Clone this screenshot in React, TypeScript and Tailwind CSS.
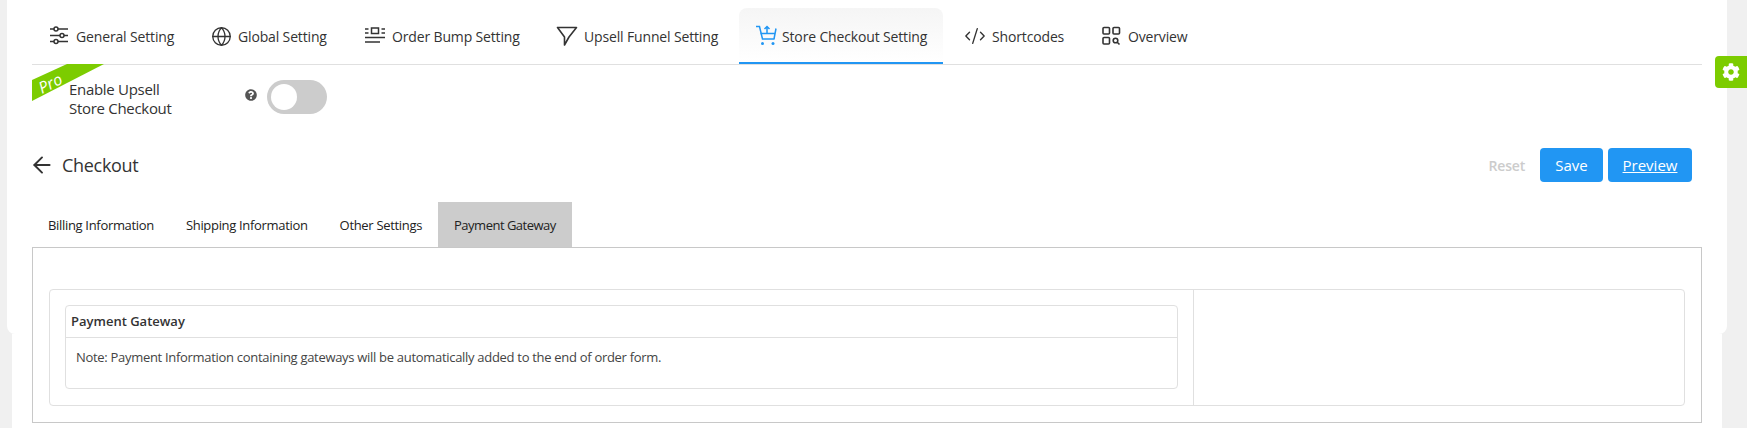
import { ArrowLeft, CodeXml, Globe } from 'lucide-react';
import { FaCog, FaQuestionCircle } from 'react-icons/fa';

const SlidersIcon = () => (
  <svg width="20" height="20" viewBox="0 0 20 20" fill="none" stroke="currentColor" strokeWidth="1.5">
    <path d="M1 3h4M9 3h10M1 9.500h10M15 9.500h4M1 15.500h4M9 15.500h10" />
    <circle cx="7" cy="3" r="2" />
    <circle cx="13" cy="9.500" r="2" />
    <circle cx="7" cy="15.500" r="2" />
  </svg>
);

const BumpIcon = () => (
  <svg width="20" height="20" viewBox="0 0 20 20" fill="none" stroke="currentColor" strokeWidth="1.500">
    <rect x="6.500" y="2" width="7" height="5.500" />
    <path d="M0 3h3.500M16.500 3H20M0 7h3.500M16.500 7H20M0 11.500h20M0 16h15" />
  </svg>
);

const FunnelIcon = () => (
  <svg width="22" height="22" viewBox="0 0 22 22" fill="none" stroke="currentColor" strokeWidth="1.600" strokeLinejoin="round">
    <path d="M1.500 2.500h19L13 12l-4.500 8v-8z" />
  </svg>
);

const CartIcon = () => (
  <svg width="22" height="22" viewBox="0 0 22 22" fill="none" stroke="currentColor" strokeWidth="1.500">
    <path d="M1 1.500h3.500l3 12.500h12" />
    <path d="M5.500 8.500h15M21 3.500 19 14" />
    <path d="M12 9V1.500M9.500 4 12 1.500 14.500 4" />
    <circle cx="7.500" cy="18.500" r="1.500" fill="currentColor" stroke="none" />
    <circle cx="18" cy="18.500" r="1.500" fill="currentColor" stroke="none" />
  </svg>
);

const OverviewIcon = () => (
  <svg width="20" height="20" viewBox="0 0 20 20" fill="none" stroke="currentColor" strokeWidth="1.600">
    <rect x="2" y="1.500" width="6.500" height="6.500" rx="1" />
    <rect x="12" y="1.500" width="6.500" height="6.500" rx="1" />
    <rect x="2" y="11.500" width="6.500" height="6.500" rx="1" />
    <circle cx="14.500" cy="14.500" r="2.300" />
    <path d="m16.200 16.200 2.300 2.300" />
  </svg>
);

const navItems = [
  { label: 'General Setting', icon: <SlidersIcon />, width: 'w-[162px]' },
  { label: 'Global Setting', icon: <Globe size={21} strokeWidth={1.5} />, width: 'w-[154px]' },
  { label: 'Order Bump Setting', icon: <BumpIcon />, width: 'w-[192px]' },
  { label: 'Upsell Funnel Setting', icon: <FunnelIcon />, width: 'w-[199px]' },
  { label: 'Store Checkout Setting', icon: <CartIcon />, width: 'w-[204px] mr-[5px]', active: true },
  { label: 'Shortcodes', icon: <CodeXml size={22} strokeWidth={1.5} />, width: 'w-[136px]' },
  { label: 'Overview', icon: <OverviewIcon />, width: 'w-[120px]' },
];

const tabs = ['Billing Information', 'Shipping Information', 'Other Settings', 'Payment Gateway'];

export default function App() {
  return (
    <div className="relative h-[428px] w-full overflow-hidden bg-[#f0f0f0] font-['Open_Sans',sans-serif] text-[#333]">
      {/* Floating settings handle */}
      <div className="absolute right-0 top-[56px] z-20 flex h-[32px] w-[32px] items-center justify-center rounded-l bg-[#7ccc00] text-white">
        <FaCog size={18} />
      </div>

      <div className="relative z-10 ml-[7px] h-[334px] w-[1720px] rounded-b-lg bg-white px-[25px]">
        {/* Top nav */}
        <div className="flex h-[65px] border-b border-[#e0e0e0] pt-2">
          {navItems.map((item) => (
            <div
              key={item.label}
              className={`flex h-[56px] shrink-0 items-center pl-[16px] text-[14px] font-medium tracking-[-0.15px] ${item.width} ${
                item.active
                  ? 'gap-[5px] rounded-t-lg border-b-2 border-[#2196f3] bg-gradient-to-b from-[#f5f5f5] to-white pt-[2px]'
                  : 'gap-[6px]'
              }`}
            >
              <span className={`flex w-[22px] shrink-0 justify-center ${item.active ? 'text-[#2196f3]' : 'text-[#333]'}`}>
                {item.icon}
              </span>
              <span className="whitespace-nowrap">{item.label}</span>
            </div>
          ))}
        </div>

        {/* Pro toggle row */}
        <div className="relative flex h-[50px] items-start">
          <svg className="absolute -top-px left-0" width="73" height="37" viewBox="0 0 73 37">
            <polygon points="0,16 35,0 72,0 0,37" fill="#7ccc00" />
            <text x="10" y="30" transform="rotate(-27 10 30)" fill="#fff" fontSize="16" fontStyle="italic" fontFamily="Open Sans">
              Pro
            </text>
          </svg>
          <div className="ml-[37px] mt-[15px] w-[176px] text-[15px] font-medium leading-[19px] tracking-[-0.3px]">
            Enable Upsell
            <br />
            Store Checkout
          </div>
          <FaQuestionCircle className="mt-[24px] text-[#555]" size={12} />
          <div className="ml-[10px] mt-[15px] flex h-[34px] w-[60px] items-center rounded-full bg-[#ccc] pl-[4px]">
            <div className="h-[26px] w-[26px] rounded-full bg-white" />
          </div>
        </div>

        {/* Checkout header */}
        <div className="mt-[33px] flex h-[34px] items-center">
          <ArrowLeft size={26} strokeWidth={1.800} className="-ml-[3px] text-[#333]" />
          <span className="ml-[7px] text-[18px] font-medium tracking-[-0.3px]">Checkout</span>
          <span className="ml-auto mr-[15px] text-[14px] font-semibold tracking-[-0.2px] text-[#ccc]">Reset</span>
          <button className="h-[34px] w-[63px] rounded bg-[#2196f3] text-[15px] text-white">Save</button>
          <button className="ml-[5px] mr-[10px] h-[34px] w-[84px] rounded bg-[#2196f3] text-[15px] text-white underline">
            Preview
          </button>
        </div>

        {/* Sub tabs */}
        <div className="mt-[20px] flex h-[45px]">
          {tabs.map((tab) => (
            <div
              key={tab}
              className={`flex items-center px-4 pt-[2px] text-[13px] text-[#222] ${
                tab === 'Payment Gateway' ? 'bg-[#ccc] tracking-[-0.5px]' : 'tracking-[-0.32px]'
              }`}
            >
              {tab}
            </div>
          ))}
        </div>

        {/* Payment box */}
        <div className="h-[176px] w-full border border-[#c8c8c8] bg-white px-[16px] pt-[41px]">
          <div className="flex h-[117px] rounded border border-[#e0e0e0]">
            <div className="w-[1144px] border-r border-[#e0e0e0] px-[15px] pt-[15px]">
              <div className="h-[84px] rounded border border-[#e0e0e0]">
                <div className="flex h-[32px] items-center border-b border-[#e0e0e0] pl-[5px] pt-[1px] text-[13px] font-semibold">
                  Payment Gateway
                </div>
                <div className="pl-[10px] pt-[11px] text-[13px] leading-[17px] tracking-[-0.3px] text-[#444]">
                  Note: Payment Information containing gateways will be automatically added to the end of order form.
                </div>
              </div>
            </div>
            <div className="flex-1" />
          </div>
        </div>
      </div>

      {/* Lower part of the page background */}
      <div className="ml-[12px] h-[94px] w-[1710px] bg-white" />
    </div>
  );
}
